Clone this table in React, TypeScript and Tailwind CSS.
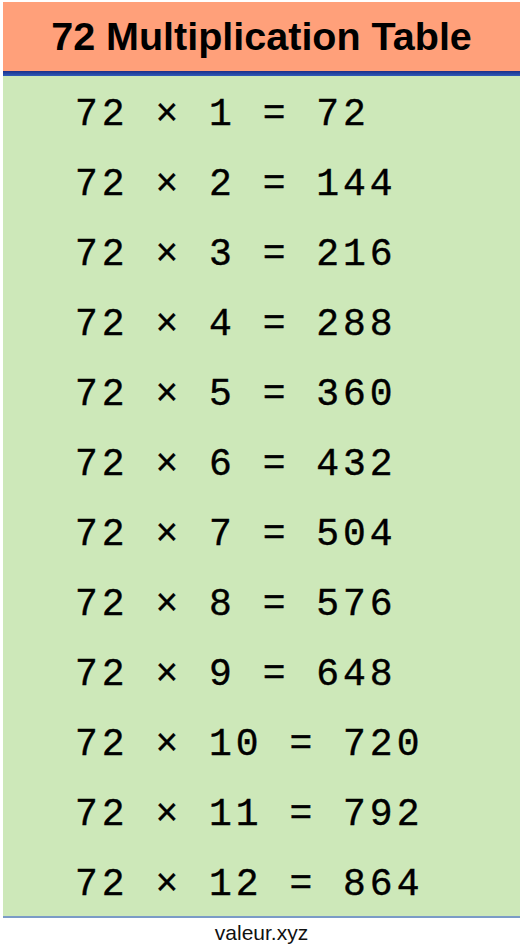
const rows = Array.from({ length: 12 }, (_, i) => i + 1);

export default function App() {
  return (
    <div className="min-h-screen bg-white pl-[3px] pt-[2px]">
      <div className="flex flex-col">
        <header className="flex h-[69px] items-center justify-center bg-[#ffa07a]">
          <h1 className="font-['Liberation_Sans',Arial,sans-serif] text-[39.5px] font-bold leading-none text-black">
            72 Multiplication Table
          </h1>
        </header>
        <div className="h-[5px] bg-gradient-to-b from-[#1b2f8a] to-[#2f5bb8]" />
        <main className="bg-[#cde8b9]">
          {rows.map((n) => (
            <div key={n} className="flex h-[70px] items-center pl-[72px] pt-[8px]">
              <span className="whitespace-pre font-['Liberation_Mono',monospace] text-[38px] leading-none tracking-[4px] text-black [-webkit-text-stroke:0.4px_black]">
                {`72 × ${n} = ${72 * n}`}
              </span>
            </div>
          ))}
        </main>
        <div className="h-[2px] bg-[#7b9bc6]" />
        <footer className="flex h-[29px] items-center justify-center">
          <span className="font-['Liberation_Sans',Arial,sans-serif] text-[21px] leading-none text-[#111]">
            valeur.xyz
          </span>
        </footer>
      </div>
    </div>
  );
}
